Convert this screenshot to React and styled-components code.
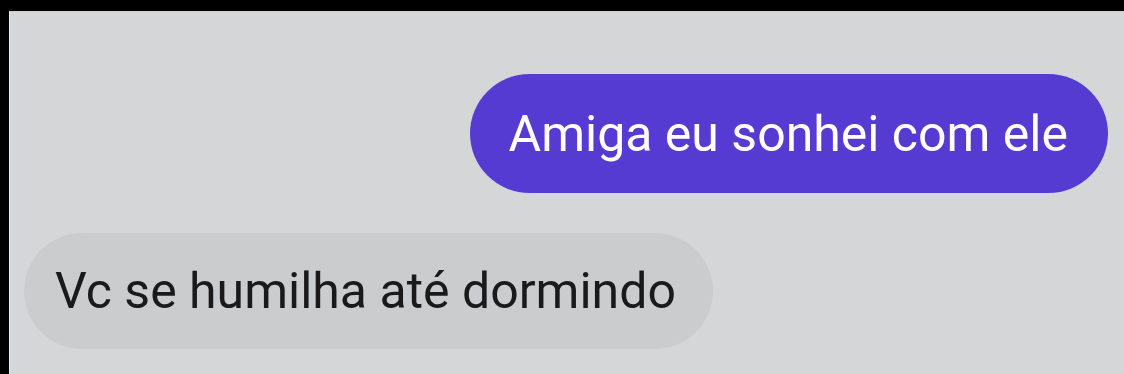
import React from "react";
import styled, { createGlobalStyle } from "styled-components";

const Global = createGlobalStyle`
  html, body { margin: 0; padding: 0; background: #000; }
  body { font-family: Roboto, "Noto Sans", Arial, sans-serif; }
`;

const Frame = styled.div`
  width: 1124px;
  height: 374px;
  box-sizing: border-box;
  background: #000;
  padding: 11px 0 0 9px;
  display: flex;
`;

const Panel = styled.div`
  flex: 1;
  background: #d5d6d7;
  border-left: 1px solid #eceded;
  border-top: 1px solid #c9cac9;
  box-sizing: border-box;
  display: flex;
  flex-direction: column;
  padding: 62px 16px 0 14px;
  gap: 40px;
`;

const Row = styled.div`
  display: flex;
  justify-content: ${(p) => (p.$out ? "flex-end" : "flex-start")};
`;

const Bubble = styled.div`
  height: ${(p) => (p.$out ? 119 : 116)}px;
  border-radius: 60px;
  display: flex;
  align-items: center;
  box-sizing: border-box;
  padding: ${(p) => (p.$out ? "0 40px 0 39px" : "0 37px 0 31px")};
  background: ${(p) => (p.$out ? "#563bd3" : "#cbcccd")};
  color: ${(p) => (p.$out ? "#ffffff" : "#1a1a1a")};
  font-size: 50px;
  font-family: Roboto, Arial, sans-serif;
  white-space: nowrap;
`;

export default function App() {
  return (
    <>
      <Global />
      <Frame>
        <Panel>
          <Row $out>
            <Bubble $out>Amiga eu sonhei com ele</Bubble>
          </Row>
          <Row>
            <Bubble>Vc se humilha até dormindo</Bubble>
          </Row>
        </Panel>
      </Frame>
    </>
  );
}
